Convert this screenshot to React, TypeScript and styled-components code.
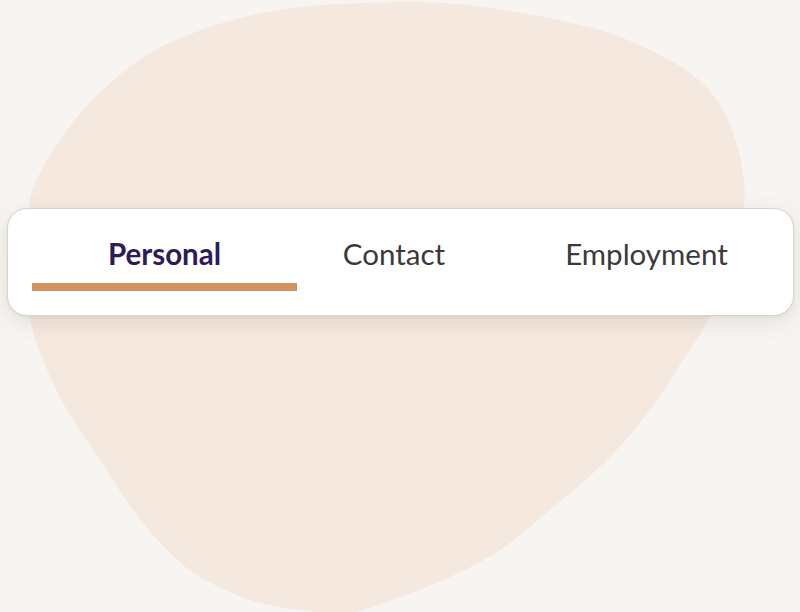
import React from "react";
import styled, { createGlobalStyle } from "styled-components";

const GlobalStyle = createGlobalStyle`
  html, body { margin: 0; padding: 0; background: #f7f5f2; }
  body { font-family: Lato, "Open Sans", sans-serif; }
  * { box-sizing: border-box; }
`;

const Page = styled.div`
  position: relative;
  width: 800px;
  height: 612px;
  overflow: hidden;
  background: #f7f5f2;
  padding: 208px 6px 0 7px;
`;

const Backdrop = styled.svg`
  position: absolute;
  left: 0;
  top: 0;
  width: 800px;
  height: 612px;
  z-index: 0;
`;

const Card = styled.div`
  position: relative;
  z-index: 1;
  width: 787px;
  height: 108px;
  background: #ffffff;
  border: 1px solid #d9d3cd;
  border-radius: 20px;
  box-shadow: 0 6px 22px rgba(90, 70, 50, 0.12), 0 1px 3px rgba(90, 70, 50, 0.08);
  padding: 27px 0 0 24px;
`;

const Tabs = styled.div`
  display: grid;
  grid-template-columns: 265px 194px 1fr;
  align-items: start;
`;

const Tab = styled.div<{ $active?: boolean }>`
  display: flex;
  flex-direction: column;
  align-items: center;
  gap: 11px;
  font-size: 29.5px;
  line-height: 36px;
  font-weight: ${(p) => (p.$active ? 700 : 400)};
  color: ${(p) => (p.$active ? "#2c1c57" : "#3a3a3c")};
  &:last-child {
    padding-left: 9px;
  }
`;

const Indicator = styled.div<{ $active?: boolean }>`
  align-self: stretch;
  height: 8px;
  background: ${(p) => (p.$active ? "#d4935f" : "transparent")};
`;

const pts: [number, number][] = [
  [400, 2], [467, 5], [533, 15], [600, 30], [650, 50], [690, 73], [717, 100],
  [733, 133], [742, 167], [744, 205], [732, 262], [710, 317], [683, 360],
  [650, 410], [607, 460], [550, 510], [500, 550], [450, 577], [400, 597],
  [350, 613], [300, 610], [250, 600], [200, 577], [167, 550], [133, 510],
  [100, 460], [67, 410], [43, 360], [30, 317], [27, 260], [30, 200],
  [43, 167], [60, 140], [83, 110], [117, 77], [150, 53], [183, 37],
  [233, 20], [300, 7],
];

function blobPath(p: [number, number][]): string {
  const n = p.length;
  let d = `M ${p[0][0]} ${p[0][1]}`;
  for (let i = 0; i < n; i++) {
    const p0 = p[(i - 1 + n) % n];
    const p1 = p[i];
    const p2 = p[(i + 1) % n];
    const p3 = p[(i + 2) % n];
    const c1x = p1[0] + (p2[0] - p0[0]) / 6;
    const c1y = p1[1] + (p2[1] - p0[1]) / 6;
    const c2x = p2[0] - (p3[0] - p1[0]) / 6;
    const c2y = p2[1] - (p3[1] - p1[1]) / 6;
    d += ` C ${c1x.toFixed(1)} ${c1y.toFixed(1)}, ${c2x.toFixed(1)} ${c2y.toFixed(1)}, ${p2[0]} ${p2[1]}`;
  }
  return d + " Z";
}

const tabs = [
  { label: "Personal", active: true },
  { label: "Contact", active: false },
  { label: "Employment", active: false },
];

export default function App() {
  return (
    <>
      <GlobalStyle />
      <Page>
        <Backdrop viewBox="0 0 800 612" aria-hidden="true">
          <path d={blobPath(pts)} fill="#f5e8df" />
        </Backdrop>
        <Card>
          <Tabs>
            {tabs.map((t) => (
              <Tab key={t.label} $active={t.active}>
                <span>{t.label}</span>
                <Indicator $active={t.active} />
              </Tab>
            ))}
          </Tabs>
        </Card>
      </Page>
    </>
  );
}
